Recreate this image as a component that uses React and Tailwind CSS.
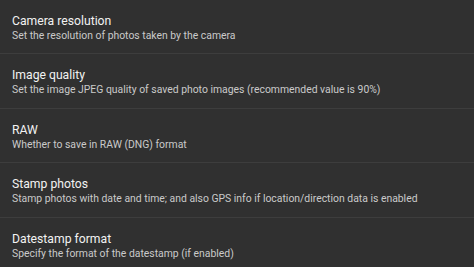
export default function App() {
  const items = [
    ["Camera resolution", "Set the resolution of photos taken by the camera", "h-[54px]"],
    ["Image quality", "Set the image JPEG quality of saved photo images (recommended value is 90%)", "h-[55px]"],
    ["RAW", "Whether to save in RAW (DNG) format", "h-[54px]"],
    ["Stamp photos", "Stamp photos with date and time; and also GPS info if location/direction data is enabled", "h-[55px]"],
    ["Datestamp format", "Specify the format of the datestamp (if enabled)", "h-[49px]"],
  ];
  return (
    <div className="w-[474px] h-[267px] overflow-hidden bg-[#303030]" style={{ fontFamily: "Roboto, sans-serif" }}>
      {items.map(([t, s, h], i) => (
        <div key={i} className={`${h} flex flex-col px-3 pt-[13px] ${i < 4 ? "border-b border-[#3d3d3d]" : ""}`}>
          <div className="text-[12.2px] leading-[16px] text-[#f2f2f2]">{t}</div>
          <div className="text-[10.4px] leading-[13px] text-[#cacaca] whitespace-nowrap">{s}</div>
        </div>
      ))}
    </div>
  );
}
